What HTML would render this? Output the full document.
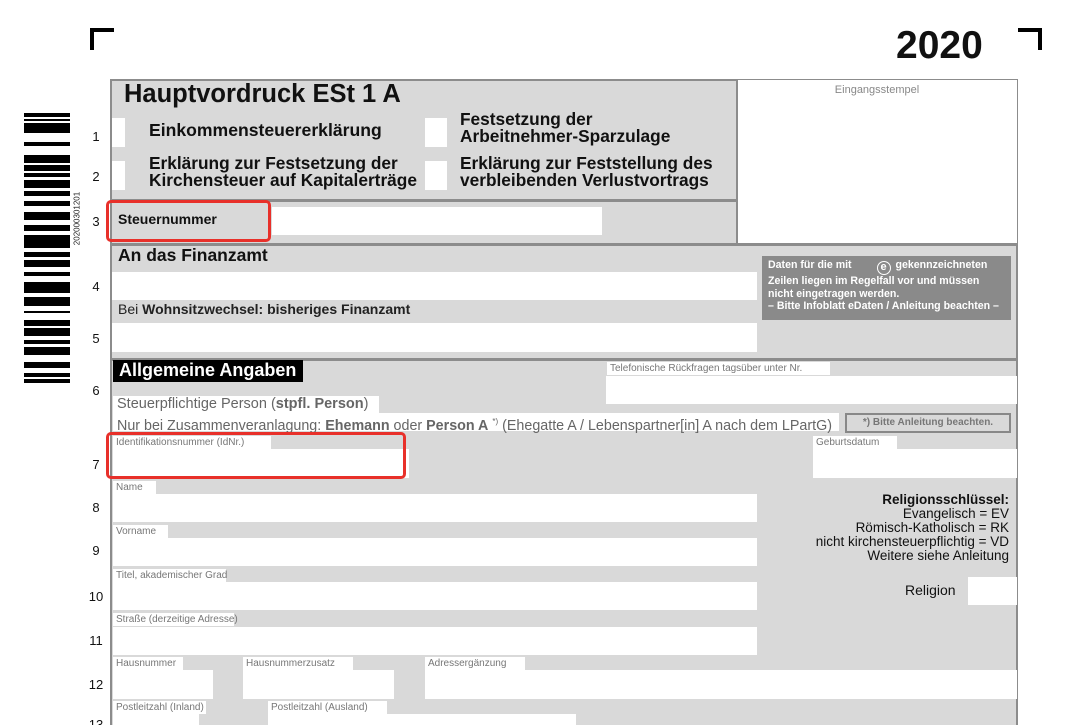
<!DOCTYPE html>
<html><head><meta charset="utf-8"><style>
*{margin:0;padding:0;box-sizing:border-box}
html,body{width:1080px;height:725px;overflow:hidden}
body{background:#fff;position:relative;font-family:"Liberation Sans",Arial,sans-serif;color:#111}
.a{position:absolute}
.w{position:absolute;background:#fff}
.n{position:absolute;left:88px;width:16px;text-align:center;font-size:13px;color:#111}
.lb{position:absolute;background:#fff;font-size:10px;color:#777;padding-left:3px;height:13px;line-height:13px;white-space:nowrap}
.bar{position:absolute;left:24px;width:46px;background:#000}
.hl{position:absolute;background:#8c8c8c}
.red{position:absolute;border:3px solid #e8302a;border-radius:5px}
.b{font-weight:bold}
</style></head><body>
<div class="a" style="left:90px;top:28px;width:24px;height:4px;background:#000"></div>
<div class="a" style="left:90px;top:28px;width:4px;height:22px;background:#000"></div>
<div class="a" style="left:1018px;top:28px;width:24px;height:4px;background:#000"></div>
<div class="a" style="left:1038px;top:28px;width:4px;height:22px;background:#000"></div>
<div class="a b" style="left:896px;top:24px;font-size:39px;line-height:44px;color:#111">2020</div>

<div class="bar" style="top:113px;height:4px"></div>
<div class="bar" style="top:119px;height:2px"></div>
<div class="bar" style="top:123px;height:10px"></div>
<div class="bar" style="top:142px;height:4px"></div>
<div class="bar" style="top:155px;height:8px"></div>
<div class="bar" style="top:165px;height:6px"></div>
<div class="bar" style="top:173px;height:4px"></div>
<div class="bar" style="top:180px;height:8px"></div>
<div class="bar" style="top:191px;height:5px"></div>
<div class="bar" style="top:201px;height:5px"></div>
<div class="bar" style="top:212px;height:8px"></div>
<div class="bar" style="top:225px;height:6px"></div>
<div class="bar" style="top:235px;height:13px"></div>
<div class="bar" style="top:252px;height:5px"></div>
<div class="bar" style="top:260px;height:7px"></div>
<div class="bar" style="top:272px;height:4px"></div>
<div class="bar" style="top:282px;height:11px"></div>
<div class="bar" style="top:297px;height:9px"></div>
<div class="bar" style="top:311px;height:2px"></div>
<div class="bar" style="top:320px;height:6px"></div>
<div class="bar" style="top:328px;height:8px"></div>
<div class="bar" style="top:340px;height:4px"></div>
<div class="bar" style="top:347px;height:8px"></div>
<div class="bar" style="top:362px;height:6px"></div>
<div class="bar" style="top:373px;height:4px"></div>
<div class="bar" style="top:379px;height:4px"></div>
<div class="a" style="left:37px;top:214px;font-size:8px;color:#222;transform:rotate(-90deg);width:80px;text-align:center;line-height:9px">202000301201</div>

<div class="n" style="top:129px">1</div>
<div class="n" style="top:169px">2</div>
<div class="n" style="top:214px">3</div>
<div class="n" style="top:279px">4</div>
<div class="n" style="top:331px">5</div>
<div class="n" style="top:383px">6</div>
<div class="n" style="top:457px">7</div>
<div class="n" style="top:500px">8</div>
<div class="n" style="top:543px">9</div>
<div class="n" style="top:589px">10</div>
<div class="n" style="top:633px">11</div>
<div class="n" style="top:677px">12</div>
<div class="n" style="top:717px">13</div>

<div class="a" style="left:110px;top:79px;width:908px;height:660px;background:#d9d9d9;border-left:2px solid #8c8c8c;border-top:2px solid #8c8c8c;border-right:2px solid #8c8c8c"></div>
<div class="w" style="left:736px;top:80px;width:281px;height:165px;border-left:2px solid #8c8c8c"></div>
<div class="a" style="left:738px;top:84px;width:278px;text-align:center;font-size:11px;color:#888">Eingangsstempel</div>
<div class="hl" style="left:110px;top:199px;width:627px;height:3px"></div>
<div class="hl" style="left:110px;top:243px;width:908px;height:3px"></div>
<div class="hl" style="left:110px;top:358px;width:908px;height:3px"></div>

<div class="a b" style="left:124px;top:79px;font-size:25.5px;line-height:30px">Hauptvordruck ESt 1 A</div>
<div class="w" style="left:112px;top:118px;width:13px;height:29px"></div>
<div class="w" style="left:425px;top:118px;width:22px;height:29px"></div>
<div class="w" style="left:112px;top:161px;width:13px;height:29px"></div>
<div class="w" style="left:425px;top:161px;width:22px;height:29px"></div>
<div class="a b" style="left:149px;top:120px;font-size:17.6px;line-height:20px">Einkommensteuererklärung</div>
<div class="a b" style="left:460px;top:111px;font-size:17.3px;line-height:17px">Festsetzung der<br>Arbeitnehmer-Sparzulage</div>
<div class="a b" style="left:149px;top:155px;font-size:17.3px;line-height:17px">Erklärung zur Festsetzung der<br>Kirchensteuer auf Kapitalerträge</div>
<div class="a b" style="left:460px;top:155px;font-size:17.3px;line-height:17px">Erklärung zur Feststellung des<br>verbleibenden Verlustvortrags</div>

<div class="a b" style="left:118px;top:211px;font-size:14px">Steuernummer</div>
<div class="w" style="left:272px;top:207px;width:330px;height:28px"></div>
<div class="red" style="left:106px;top:200px;width:165px;height:42px"></div>

<div class="a b" style="left:118px;top:245px;font-size:17.5px">An das Finanzamt</div>
<div class="w" style="left:112px;top:272px;width:645px;height:28px"></div>
<div class="a" style="left:118px;top:301px;font-size:14px;color:#222">Bei <b>Wohnsitzwechsel: bisheriges Finanzamt</b></div>
<div class="w" style="left:112px;top:323px;width:645px;height:29px"></div>
<div class="a b" style="left:762px;top:256px;width:249px;height:64px;background:#8a8a8a;color:#fff;font-size:10.6px;line-height:12.5px;padding:3px 0 0 6px;white-space:nowrap">Daten für die mit <span style="display:inline-block;width:14px;height:14px;border:1.5px solid #fff;border-radius:50%;text-align:center;line-height:11px;font-size:11px;margin:0 2px 0 22px;vertical-align:-2px">e</span> gekennzeichneten<br>Zeilen liegen im Regelfall vor und müssen<br>nicht eingetragen werden.<br>– Bitte Infoblatt eDaten / Anleitung beachten –</div>

<div class="a b" style="left:113px;top:360px;width:190px;height:22px;background:#000;color:#fff;font-size:18px;line-height:21px;padding-left:6px">Allgemeine Angaben</div>
<div class="lb" style="left:607px;top:362px;width:223px">Telefonische Rückfragen tagsüber unter Nr.</div>
<div class="w" style="left:606px;top:376px;width:411px;height:28px"></div>
<div class="a" style="left:113px;top:396px;width:266px;height:17px;background:#fff;font-size:14.5px;color:#666;padding-left:4px;line-height:17px">Steuerpflichtige Person (<b>stpfl. Person</b>)</div>
<div class="a" style="left:113px;top:413px;width:726px;height:18px;background:#fff;font-size:14.3px;color:#666;padding-left:4px;line-height:18px;white-space:nowrap">Nur bei Zusammenveranlagung: <b>Ehemann</b> oder <b>Person A</b> <sup style="font-size:8px">*)</sup> (Ehegatte A / Lebenspartner[in] A nach dem LPartG)</div>
<div class="a b" style="left:845px;top:413px;width:166px;height:20px;border:2px solid #888;font-size:10px;color:#777;text-align:center;line-height:15px">*) Bitte Anleitung beachten.</div>

<div class="lb" style="left:113px;top:436px;width:158px">Identifikationsnummer (IdNr.)</div>
<div class="w" style="left:113px;top:449px;width:296px;height:29px"></div>
<div class="red" style="left:106px;top:432px;width:300px;height:47px"></div>
<div class="lb" style="left:813px;top:436px;width:84px">Geburtsdatum</div>
<div class="w" style="left:813px;top:449px;width:204px;height:29px"></div>

<div class="lb" style="left:113px;top:481px;width:43px">Name</div>
<div class="w" style="left:113px;top:494px;width:644px;height:28px"></div>
<div class="lb" style="left:113px;top:525px;width:55px">Vorname</div>
<div class="w" style="left:113px;top:538px;width:644px;height:28px"></div>
<div class="lb" style="left:113px;top:569px;width:113px">Titel, akademischer Grad</div>
<div class="w" style="left:113px;top:582px;width:644px;height:28px"></div>
<div class="lb" style="left:113px;top:613px;width:121px">Straße (derzeitige Adresse)</div>
<div class="w" style="left:113px;top:627px;width:644px;height:28px"></div>
<div class="lb" style="left:113px;top:657px;width:70px">Hausnummer</div>
<div class="w" style="left:113px;top:670px;width:100px;height:29px"></div>
<div class="lb" style="left:243px;top:657px;width:110px">Hausnummerzusatz</div>
<div class="w" style="left:243px;top:670px;width:151px;height:29px"></div>
<div class="lb" style="left:425px;top:657px;width:100px">Adressergänzung</div>
<div class="w" style="left:425px;top:670px;width:592px;height:29px"></div>
<div class="lb" style="left:113px;top:701px;width:93px">Postleitzahl (Inland)</div>
<div class="w" style="left:113px;top:714px;width:86px;height:20px"></div>
<div class="lb" style="left:268px;top:701px;width:119px">Postleitzahl (Ausland)</div>
<div class="w" style="left:268px;top:714px;width:308px;height:20px"></div>

<div class="a" style="left:770px;top:493px;width:239px;text-align:right;font-size:13.5px;line-height:14px;color:#111"><b>Religionsschlüssel:</b><br>Evangelisch = EV<br>Römisch-Katholisch = RK<br>nicht kirchensteuerpflichtig = VD<br>Weitere siehe Anleitung</div>
<div class="a" style="left:905px;top:582px;font-size:14px">Religion</div>
<div class="w" style="left:968px;top:577px;width:49px;height:28px"></div>
</body></html>
